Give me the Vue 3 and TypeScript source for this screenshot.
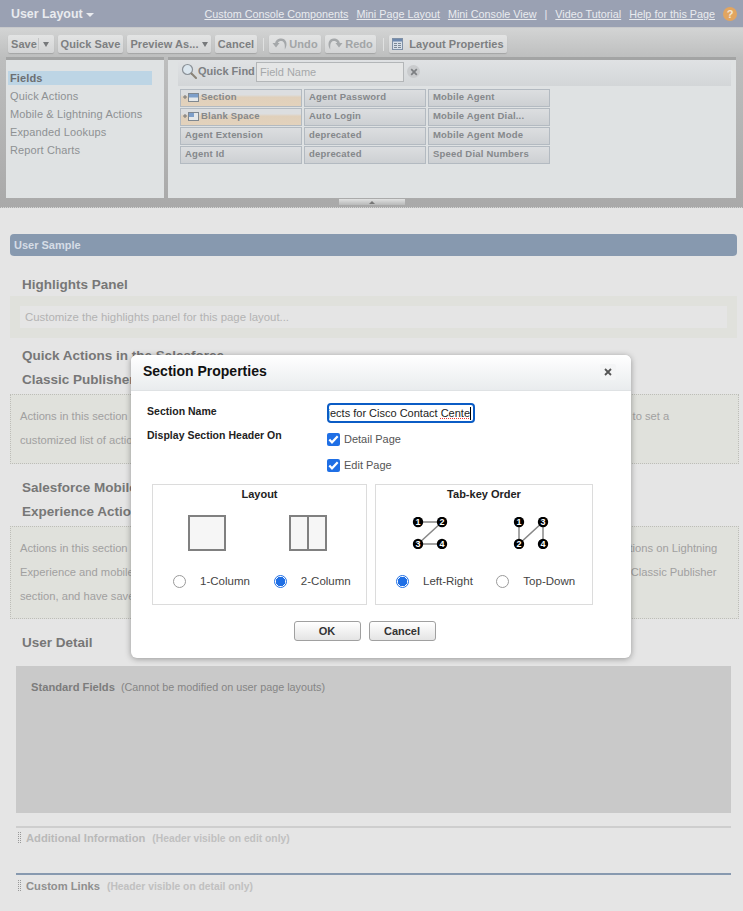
<template>
	<div class="page">
		<div class="topbar">
			<div class="title">User Layout <span class="title-caret"></span></div>
			<div class="toplinks">
				<a>Custom Console Components</a>
				<a>Mini Page Layout</a>
				<a>Mini Console View</a>
				<span class="pipe">|</span>
				<a>Video Tutorial</a>
				<a>Help for this Page</a>
				<span class="help">?</span>
			</div>
		</div>

		<div class="palette">
			<div class="toolbar">
				<div class="tbtn save">
					<span class="save-label">Save</span><span class="save-arrow"><i class="tri"></i></span>
				</div>
				<div class="tbtn quick">Quick Save</div>
				<div class="tbtn preview">Preview As...<i class="tri"></i></div>
				<div class="tbtn cancel">Cancel</div>
				<span class="sep first"></span>
				<div class="tbtn undo off">
					<svg width="15" height="12" viewBox="0 0 15 12"><path :d="arrowPath" fill="#a5a8aa" /></svg>
					Undo
				</div>
				<div class="tbtn redo off">
					<svg class="flip" width="15" height="12" viewBox="0 0 15 12"><path :d="arrowPath" fill="#a5a8aa" /></svg>
					Redo
				</div>
				<span class="sep second"></span>
				<div class="tbtn props">
					<svg width="11" height="12" viewBox="0 0 11 12">
						<rect x="0.500" y="0.500" width="10" height="11" fill="#d8dfe8" stroke="#7f90a6" />
						<rect x="1" y="1" width="9" height="2.500" fill="#6d88ad" />
						<path d="M2 5.500H5M6 5.500H9M2 7.500H5M6 7.500H9M2 9.500H5M6 9.500H9" stroke="#7b8896" />
					</svg>
					Layout Properties
				</div>
			</div>

			<div class="panes">
				<ul class="categories">
					<li v-for="(cat, i) in categories" :key="cat" :class="{ active: i === 0 }">{{ cat }}</li>
				</ul>
				<div class="fields-pane">
					<div class="quickfind">
						<svg class="lens" width="16" height="16" viewBox="0 0 16 16">
							<circle cx="6.500" cy="6.500" r="5" fill="#dbe6ee" stroke="#8b9197" stroke-width="1.200" />
							<path d="M10.500 10.500 15 15" stroke="#8a8378" stroke-width="2" stroke-linecap="round" />
						</svg>
						<span class="qf-label">Quick Find</span>
						<div class="qf-input">Field Name</div>
						<span class="qf-clear">
							<svg width="8" height="8" viewBox="0 0 8 8"><path d="M1.200 1.200 6.800 6.800M6.800 1.200 1.200 6.800" stroke="#7c7f82" stroke-width="1.700" /></svg>
						</span>
					</div>
					<div class="field-grid">
						<div v-for="(f, i) in fields" :key="i" class="field" :class="{ special: f.icon }">
							<svg v-if="f.icon" class="field-icon" width="16" height="10" viewBox="0 0 16 10">
								<path d="M0 5H4M2 3V7" stroke="#777" />
								<rect x="5.500" y="1.500" width="10" height="8" fill="#e5e8ea" stroke="#808890" />
								<rect v-if="f.icon === 'section'" x="6" y="2" width="9" height="3.500" fill="#7e9fca" />
								<rect v-else x="6" y="2" width="5" height="4" fill="#7e9fca" />
							</svg>
							<span>{{ f.name }}</span>
						</div>
					</div>
				</div>
			</div>
			<div class="handle-row"><span class="handle"><i></i></span></div>
		</div>

		<div class="sample-bar">User Sample</div>

		<h3 class="heading first-heading">Highlights Panel</h3>
		<div class="highlights">
			<div class="highlights-inner">Customize the highlights panel for this page layout...</div>
		</div>

		<h3 class="heading two-line">Quick Actions in the Salesforce<br />Classic Publisher</h3>
		<div class="dotted short">
			Actions in this section are predefined by Salesforce. You can override the predefined actions in this Classic Publisher listing to set a<br />
			customized list of actions on Salesforce Classic pages that use this layout.
		</div>

		<h3 class="heading two-line second-two">Salesforce Mobile and Lightning<br />Experience Actions</h3>
		<div class="dotted tall">
			Actions in this section are predefined by Salesforce. You can click the override the predefined actions links, to customize actions on Lightning<br />
			Experience and mobile app pages that all use this layout. If you customize all actions in the Quick Actions in the Salesforce Classic Publisher<br />
			section, and have saved the layout, then this section inherits that set of actions by default.
		</div>

		<h3 class="heading detail-heading">User Detail</h3>
		<div class="standard">
			<b>Standard Fields</b>&nbsp; (Cannot be modified on user page layouts)
		</div>

		<div class="layout-section info">
			<i class="grip"></i><b>Additional Information</b><small>(Header visible on edit only)</small>
		</div>
		<div class="layout-section links">
			<i class="grip"></i><b>Custom Links</b><small>(Header visible on detail only)</small>
		</div>

		<div class="modal">
			<div class="modal-head">
				<span>Section Properties</span>
				<button class="modal-close">
					<svg width="8" height="8" viewBox="0 0 8 8"><path d="M1 1 7 7M7 1 1 7" stroke="#555" stroke-width="1.800" /></svg>
				</button>
			</div>
			<div class="modal-body">
				<div class="form-grid">
					<label class="form-label">Section Name</label>
					<div class="name-input">
						<span>Custom Objects for Cisco Contact <u>Cente</u></span>
					</div>
					<label class="form-label second-label">Display Section Header On</label>
					<div class="checks">
						<label v-for="c in headerChecks" :key="c" class="check">
							<span class="checkbox">
								<svg width="11" height="9" viewBox="0 0 11 9"><path d="M1.300 4.500 4 7.300 9.700 1.300" fill="none" stroke="#fff" stroke-width="2.200" /></svg>
							</span>
							{{ c }}
						</label>
					</div>
				</div>

				<div class="option-boxes">
					<fieldset class="option-box layout-box">
						<div class="box-title">Layout</div>
						<div class="pictures layout-pics">
							<div class="col-pic"></div>
							<div class="col-pic two"><i></i></div>
						</div>
						<div class="radios layout-radios">
							<label class="radio-item"><span class="radio"></span>1-Column</label>
							<label class="radio-item"><span class="radio on"></span>2-Column</label>
						</div>
					</fieldset>
					<fieldset class="option-box tab-box">
						<div class="box-title">Tab-key Order</div>
						<div class="pictures tab-pics">
							<svg v-for="(pic, i) in tabPics" :key="i" width="36" height="32" viewBox="0 0 36 32">
								<path :d="pic.line" fill="none" stroke="#888" stroke-width="1.500" />
								<g v-for="n in pic.nodes" :key="n.label">
									<circle :cx="n.x" :cy="n.y" r="5.200" fill="#000" />
									<text :x="n.x" :y="n.y + 3.200" class="node-num" text-anchor="middle">{{ n.label }}</text>
								</g>
							</svg>
						</div>
						<div class="radios tab-radios">
							<label class="radio-item"><span class="radio on"></span>Left-Right</label>
							<label class="radio-item"><span class="radio"></span>Top-Down</label>
						</div>
					</fieldset>
				</div>

				<div class="modal-buttons">
					<button class="mbtn">OK</button>
					<button class="mbtn">Cancel</button>
				</div>
			</div>
		</div>
	</div>
</template>

<script setup lang="ts">
interface FieldItem {
	name: string;
	icon?: "section" | "blank";
}

const categories: string[] = [
	"Fields",
	"Quick Actions",
	"Mobile & Lightning Actions",
	"Expanded Lookups",
	"Report Charts",
];

const fields: FieldItem[] = [
	{ name: "Section", icon: "section" },
	{ name: "Agent Password" },
	{ name: "Mobile Agent" },
	{ name: "Blank Space", icon: "blank" },
	{ name: "Auto Login" },
	{ name: "Mobile Agent Dial..." },
	{ name: "Agent Extension" },
	{ name: "deprecated" },
	{ name: "Mobile Agent Mode" },
	{ name: "Agent Id" },
	{ name: "deprecated" },
	{ name: "Speed Dial Numbers" },
];

const headerChecks: string[] = ["Detail Page", "Edit Page"];

// curved arrow used by undo, flipped for redo
const arrowPath =
	"M0.500 5 L4 9.500 L7.500 5 H5.800 C6.300 3.600 7.800 3 9.300 3 C11.300 3 12.800 5 12.800 8 L12.800 11.500 C14.200 9.500 15 6.500 14.200 4 C13.400 1.500 11.300 0.500 9.200 0.500 C6 0.500 3.500 2.500 3.200 5Z";

// node positions inside the 36x32 tab order pictures
const tabPics = [
	{
		line: "M6 5H30L6 27H30",
		nodes: [
			{ label: "1", x: 6, y: 5 },
			{ label: "2", x: 30, y: 5 },
			{ label: "3", x: 6, y: 27 },
			{ label: "4", x: 30, y: 27 },
		],
	},
	{
		line: "M6 5V27L30 5V27",
		nodes: [
			{ label: "1", x: 6, y: 5 },
			{ label: "3", x: 30, y: 5 },
			{ label: "2", x: 6, y: 27 },
			{ label: "4", x: 30, y: 27 },
		],
	},
];
</script>

<style>
html,
body {
	margin: 0;
	background: #e5e5e5;
}
</style>

<style scoped>
.page {
	position: relative;
	width: 743px;
	height: 911px;
	overflow: hidden;
	background: #e5e5e5;
	font-family: "Liberation Sans", Arial, sans-serif;
	font-size: 11px;
	color: #777;
}

/* top bar */
.topbar {
	height: 27px;
	background: #9aa1b3;
	display: flex;
	align-items: center;
	justify-content: space-between;
	padding: 0 6px 0 11px;
	color: #e9ebef;
}

.title {
	font-size: 12.400px;
	font-weight: bold;
	display: flex;
	align-items: center;
}

.title-caret {
	margin-left: 3px;
	margin-top: 2px;
	border-left: 4.500px solid transparent;
	border-right: 4.500px solid transparent;
	border-top: 4.500px solid #e9ebef;
}

.toplinks {
	display: flex;
	align-items: center;
	gap: 8px;
	font-size: 10.800px;
}

.toplinks a {
	text-decoration: underline;
}

.help {
	width: 14px;
	height: 14px;
	border-radius: 50%;
	background: #e2a55f;
	color: #f4e7d4;
	font-size: 11px;
	font-weight: bold;
	text-align: center;
	line-height: 14px;
}

/* palette */
.palette {
	height: 181px;
	background: linear-gradient(#d3d4d4, #bdbebe 30px, #a9a9a9);
	border-top: 1px solid #c8c9cb;
	box-sizing: border-box;
	border-bottom: 1px dotted #aaa;
}

.toolbar {
	display: flex;
	align-items: center;
	height: 18px;
	padding: 7px 0 0 8px;
	color: #7d7f81;
	font-size: 11px;
	font-weight: bold;
}

.tbtn {
	height: 18px;
	box-sizing: border-box;
	background: linear-gradient(#e3e4e4, #d3d4d5);
	border-radius: 2px;
	box-shadow: 0 1px 1px rgba(0, 0, 0, 0.15);
	display: flex;
	align-items: center;
	justify-content: center;
	margin-right: 4px;
	white-space: nowrap;
	letter-spacing: 0.050px;
}

.tri {
	display: inline-block;
	margin-left: 3px;
	border-left: 3.500px solid transparent;
	border-right: 3.500px solid transparent;
	border-top: 5px solid #77797b;
}

.save {
	width: 46px;
	justify-content: flex-start;
}

.save-label {
	width: 31px;
	padding-left: 3px;
	box-sizing: border-box;
	border-right: 1px solid #c3c4c5;
}

.save-arrow .tri {
	margin-left: 4px;
	display: block;
}

.quick {
	width: 65px;
}

.preview {
	width: 84px;
}

.cancel {
	width: 42px;
}

.sep {
	width: 1px;
	height: 13px;
	background: #e0e1e1;
}

.sep.first {
	margin: 0 5px 0 2px;
}

.sep.second {
	margin: 0 5px 0 3px;
}

.off {
	color: #a2a5a7;
	gap: 2px;
}

.undo {
	width: 52px;
}

.redo {
	width: 51px;
}

.flip {
	transform: scaleX(-1);
}

.props {
	width: 118px;
	gap: 6px;
	margin-right: 0;
}

.panes {
	display: flex;
	height: 141px;
	margin-top: 4px;
	padding: 0 7px 0 6px;
}

.categories {
	width: 158px;
	margin: 0 4px 0 0;
	padding: 11px 0 0;
	list-style: none;
	background: #dfe2e3;
	border-top: 3px solid #a3a4a4;
	box-sizing: border-box;
	color: #8e9193;
	font-size: 11px;
}

.categories li {
	height: 14px;
	line-height: 14px;
	padding-left: 2px;
	margin: 0 12px 4px 2px;
	letter-spacing: 0.130px;
}

.categories li.active {
	background: #bdd5e5;
	color: #6c6f72;
	font-weight: bold;
}

.fields-pane {
	flex: 1;
	background: #dfe2e3;
	border-top: 3px solid #a3a4a4;
	box-sizing: border-box;
}

.quickfind {
	height: 26px;
	margin: 0 5px 0 10px;
	box-sizing: border-box;
	background: linear-gradient(#e0e2e4, #d3d6d8);
	display: flex;
	align-items: flex-start;
	padding: 2px 0 0 3px;
}

.lens {
	margin-top: 1px;
}

.qf-label {
	font-weight: bold;
	color: #7d8083;
	margin: 3px 3px 0 1px;
	width: 55px;
	white-space: nowrap;
}

.qf-input {
	width: 148px;
	height: 20px;
	box-sizing: border-box;
	border: 1px solid #b3b6b8;
	background: #e5e6e6;
	color: #a6a8aa;
	line-height: 18px;
	padding-left: 3px;
	font-size: 11px;
}

.qf-clear {
	width: 13px;
	height: 13px;
	margin: 3px 0 0 3px;
	border-radius: 50%;
	background: #c9cbcd;
	display: flex;
	align-items: center;
	justify-content: center;
}

.field-grid {
	display: grid;
	grid-template-columns: repeat(3, 122px);
	grid-auto-rows: 18px;
	gap: 1px 2px;
	margin: 3px 0 0 12px;
}

.field {
	box-sizing: border-box;
	border: 1px solid #b3bac1;
	background: linear-gradient(#dcdee0, #cdd0d3);
	font-size: 9.500px;
	font-weight: bold;
	color: #85888b;
	line-height: 14px;
	padding-left: 4px;
	letter-spacing: 0.200px;
	display: flex;
	align-items: flex-start;
	white-space: nowrap;
}

.field.special {
	background: linear-gradient(#dcdee0 30%, #e0d0bb 45%, #e3d2bc);
	padding-left: 2px;
}

.field-icon {
	margin: 2px 2px 0 0;
}

.handle-row {
	display: flex;
	justify-content: center;
	height: 8px;
	padding-top: 1px;
	box-sizing: border-box;
}

.handle {
	width: 66px;
	height: 6px;
	background: linear-gradient(#e0e1e1, #b8b9b9);
	display: flex;
	justify-content: center;
	align-items: center;
}

.handle i {
	border-left: 3px solid transparent;
	border-right: 3px solid transparent;
	border-bottom: 3px solid #777;
}

/* page content */
.sample-bar {
	height: 22px;
	margin: 26px 6px 0 10px;
	padding-left: 4px;
	border-radius: 4px;
	background: #8799af;
	color: #d6dde6;
	font-size: 11px;
	font-weight: bold;
	line-height: 22px;
}

.heading {
	margin: 0 0 -1px 22px;
	padding-top: 1px;
	font-size: 13.500px;
	font-weight: bold;
	color: #777;
	line-height: 24px;
}

.first-heading {
	margin-top: 16px;
}

.highlights {
	margin: 0 6px 0 10px;
	padding: 10px;
	height: 22px;
	background: #e0e1dc;
}

.highlights-inner {
	height: 22px;
	background: #e5e5e5;
	color: #b3b3b3;
	font-size: 11.400px;
	line-height: 22px;
	padding-left: 5px;
}

.two-line {
	margin-top: 5px;
}

.dotted {
	margin: 3px 4px 0 10px;
	padding: 9px 0 0 9px;
	box-sizing: border-box;
	background: #e0e1dc;
	border: 1px dotted #bdbdb8;
	color: #a0a0a0;
	font-size: 11.200px;
	line-height: 24px;
	white-space: nowrap;
	overflow: hidden;
}

.short {
	height: 70px;
}

.tall {
	height: 93px;
}

.second-two {
	margin-top: 11px;
}

.detail-heading {
	margin-top: 11px;
}

.standard {
	height: 147px;
	margin: 12px 12px 0 16px;
	padding: 15px 0 0 15px;
	box-sizing: border-box;
	background: #c9c9c9;
	color: #858585;
	font-size: 10.800px;
}

.standard b {
	color: #7c7c7c;
	font-size: 11.200px;
}

.layout-section {
	margin: 0 12px 0 16px;
	height: 34px;
	box-sizing: border-box;
	display: flex;
	align-items: flex-start;
	padding-left: 2px;
}

.layout-section b {
	margin-right: 7px;
	font-size: 11.200px;
	line-height: 21px;
}

.layout-section small {
	font-size: 10.300px;
	font-weight: bold;
	color: #c0c0c0;
	line-height: 22px;
}

.grip {
	width: 1px;
	height: 11px;
	margin: 4px 5px 0 0;
	border-left: 1px dotted #999;
	border-right: 1px dotted #999;
}

.info {
	margin-top: 13px;
	border-top: 2px solid #cecece;
	color: #b9b9b9;
}

.links {
	margin-top: 13px;
	padding-top: 1px;
	border-top: 2px solid #8799af;
	color: #8f8f8f;
}

/* dialog */
.modal {
	position: absolute;
	left: 131px;
	top: 355px;
	width: 500px;
	height: 303px;
	background: #fff;
	border-radius: 6px;
	box-shadow: 0 1px 6px rgba(0, 0, 0, 0.35);
	overflow: hidden;
}

.modal-head {
	height: 36px;
	box-sizing: border-box;
	padding: 8px 15px 0 12px;
	display: flex;
	justify-content: space-between;
	align-items: flex-start;
	background: linear-gradient(#fff, #e9ecee);
	border-bottom: 1px solid #dfe2e4;
	font-size: 14px;
	font-weight: bold;
	color: #111;
}

.modal-close {
	width: 16px;
	height: 16px;
	margin-top: 1px;
	padding: 0;
	border: 0;
	border-radius: 2px;
	background: #f4f5f6;
	display: flex;
	align-items: center;
	justify-content: center;
}

.modal-body {
	padding: 12px 0 0 16px;
}

.form-grid {
	display: grid;
	grid-template-columns: 180px 1fr;
	align-items: start;
}

.form-label {
	font-weight: bold;
	color: #222;
	font-size: 10.500px;
	letter-spacing: 0.020px;
	line-height: 14px;
	padding-top: 1px;
}

.second-label {
	margin-top: 4px;
}

.name-input {
	width: 148px;
	height: 20px;
	box-sizing: border-box;
	border: 2px solid #0b5cc5;
	border-radius: 4px;
	overflow: hidden;
	display: flex;
	justify-content: flex-end;
	align-items: center;
	white-space: nowrap;
	color: #222;
	padding-right: 2px;
}

.name-input span {
	border-right: 1px solid #000;
	line-height: 13px;
}

.name-input u {
	text-decoration: underline dotted #e33;
}

.checks {
	display: flex;
	flex-direction: column;
	gap: 12px;
	margin-top: 9px;
}

.check {
	display: flex;
	align-items: center;
	gap: 4px;
	height: 14px;
	color: #555;
}

.checkbox {
	width: 13px;
	height: 13px;
	border-radius: 2px;
	background: #1f6fe5;
	display: flex;
	align-items: center;
	justify-content: center;
}

.option-boxes {
	display: flex;
	gap: 8px;
	margin: 12px 0 0 5px;
}

.option-box {
	margin: 0;
	padding: 0;
	height: 121px;
	box-sizing: border-box;
	border: 1px solid #dcdcdc;
	min-width: 0;
}

.layout-box {
	width: 215px;
}

.tab-box {
	width: 218px;
}

.box-title {
	margin-top: 3px;
	text-align: center;
	font-weight: bold;
	color: #222;
	line-height: 13px;
}

.pictures {
	display: flex;
	height: 36px;
	margin-top: 14px;
}

.layout-pics {
	padding-left: 35px;
	gap: 63px;
}

.tab-pics {
	margin-top: 16px;
	height: 34px;
	padding-left: 36px;
	gap: 65px;
	align-items: flex-start;
}

.col-pic {
	width: 38px;
	height: 36px;
	box-sizing: border-box;
	border: 2.500px solid #808080;
	background: #f6f6f6;
	display: flex;
	justify-content: center;
}

.col-pic.two i {
	width: 2.500px;
	background: #808080;
}

.node-num {
	font-size: 9px;
	font-weight: bold;
	fill: #fff;
}

.radios {
	display: flex;
	margin-top: 23px;
	font-size: 11.500px;
	color: #444;
}

.layout-radios {
	padding-left: 20px;
	gap: 24px;
}

.tab-radios {
	padding-left: 20px;
	gap: 23.500px;
}

.radio-item {
	display: flex;
	align-items: center;
	gap: 14px;
	height: 14px;
	white-space: nowrap;
}

.radio {
	width: 13px;
	height: 13px;
	box-sizing: border-box;
	border: 1px solid #9a9a9a;
	border-radius: 50%;
	background: #fff;
}

.radio.on {
	border: 1px solid #1f6fe5;
	background: radial-gradient(circle, #1f6fe5 0 4.500px, #fff 5px);
}

.modal-buttons {
	display: flex;
	justify-content: center;
	gap: 8px;
	margin: 16px 16px 0 0;
	padding-right: 33px;
}

.mbtn {
	width: 67px;
	height: 20px;
	padding: 0;
	box-sizing: border-box;
	border: 1px solid #a0a0a0;
	border-radius: 3px;
	background: linear-gradient(#fff, #e4e4e4);
	font-family: inherit;
	font-size: 11px;
	font-weight: bold;
	color: #333;
}
</style>
